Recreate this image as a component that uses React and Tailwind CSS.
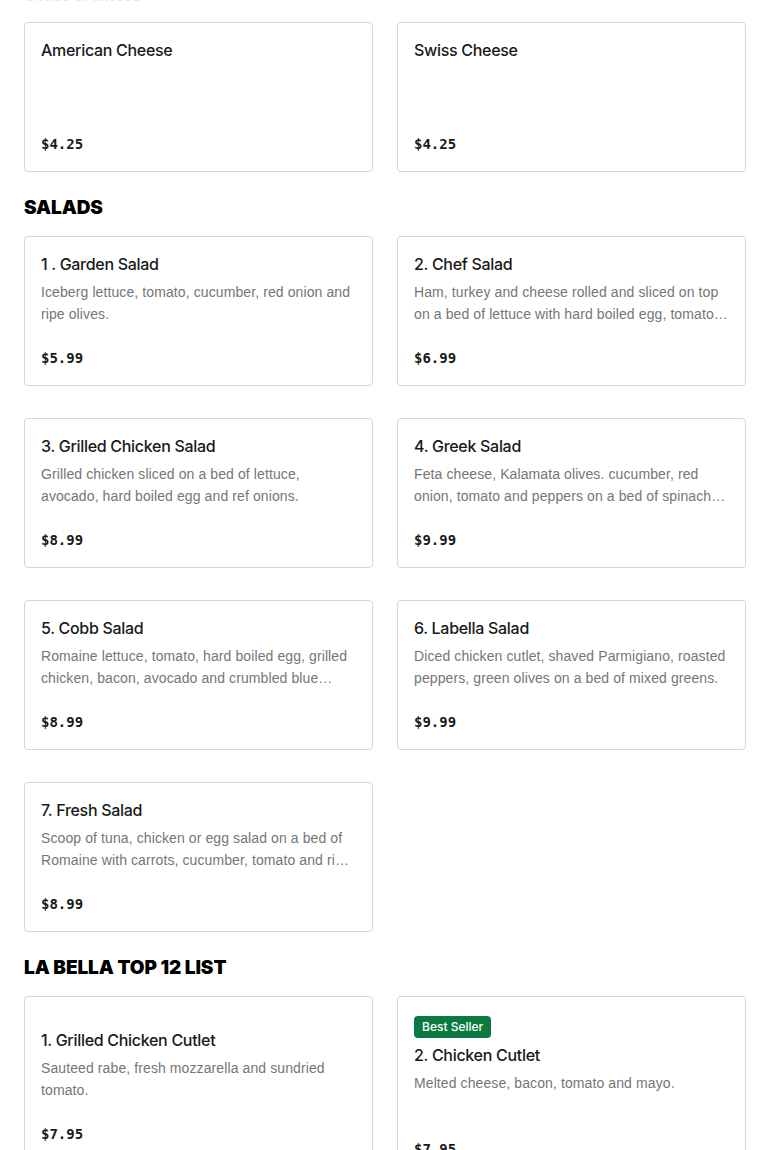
import React from "react";

const font = { fontFamily: "Inter, 'Noto Sans', Arial, sans-serif" };

function Card({ title, desc, price, badge }) {
  return (
    <div className="min-h-[150px] rounded-[4px] border border-[#d6d6d6] bg-white px-4 py-4 flex flex-col justify-center">
      <div>
        {badge && (
          <div className="mb-[6px] inline-flex h-[22px] items-center rounded-[4px] bg-[#0b7a41] px-2 text-[12px] font-medium text-white">
            {badge}
          </div>
        )}
        <div className="h-[24px] text-[16px] leading-[22px] font-medium text-[#191919] tracking-[-0.3px]">
          {title}
        </div>
        <div
          className="mt-1 h-[44px] text-[14px] leading-[22px] text-[#767676] tracking-[0.1px] line-clamp-2"
          style={{ fontFamily: "'Liberation Sans', Arial, sans-serif" }}
        >
          {desc}
        </div>
        <div
          className="mt-[22px] h-[22px] text-[14px] leading-[22px] font-bold text-[#191919]"
          style={{ fontFamily: "'DejaVu Sans Mono', 'Liberation Mono', monospace" }}
        >
          {price}
        </div>
      </div>
    </div>
  );
}

function Section({ title, children }) {
  return (
    <div className="mt-[22px]">
      <h2
        className="mb-[14px] h-[28px] text-[19px] leading-[28px] font-black uppercase text-black tracking-[-0.1px]"
        style={{ fontFamily: "Inter, Arial, sans-serif" }}
      >
        {title}
      </h2>
      <div className="grid grid-cols-2 gap-x-6 gap-y-8">{children}</div>
    </div>
  );
}

export default function App() {
  return (
    <div className="bg-white px-6 pb-10" style={font}>
      <div className="-mt-[14px] h-[20px] text-[14px] leading-[20px] text-[#e4e4e4]">
        Choice of cheese
      </div>
      <div className="mt-4 grid grid-cols-2 gap-x-6 gap-y-8">
        <Card title="American Cheese" desc="" price="$4.25" />
        <Card title="Swiss Cheese" desc="" price="$4.25" />
      </div>

      <Section title="Salads">
        <Card
          title="1 . Garden Salad"
          desc="Iceberg lettuce, tomato, cucumber, red onion and ripe olives."
          price="$5.99"
        />
        <Card
          title="2. Chef Salad"
          desc="Ham, turkey and cheese rolled and sliced on top on a bed of lettuce with hard boiled egg, tomato and cucumber."
          price="$6.99"
        />
        <Card
          title="3. Grilled Chicken Salad"
          desc="Grilled chicken sliced on a bed of lettuce, avocado, hard boiled egg and ref onions."
          price="$8.99"
        />
        <Card
          title="4. Greek Salad"
          desc="Feta cheese, Kalamata olives. cucumber, red onion, tomato and peppers on a bed of spinach and romaine."
          price="$9.99"
        />
        <Card
          title="5. Cobb Salad"
          desc="Romaine lettuce, tomato, hard boiled egg, grilled chicken, bacon, avocado and crumbled blue cheese."
          price="$8.99"
        />
        <Card
          title="6. Labella Salad"
          desc="Diced chicken cutlet, shaved Parmigiano, roasted peppers, green olives on a bed of mixed greens."
          price="$9.99"
        />
        <Card
          title="7. Fresh Salad"
          desc="Scoop of tuna, chicken or egg salad on a bed of Romaine with carrots, cucumber, tomato and ripe olives."
          price="$8.99"
        />
      </Section>

      <Section title="La Bella Top 12 List">
        <Card
          title="1. Grilled Chicken Cutlet"
          desc="Sauteed rabe, fresh mozzarella and sundried tomato."
          price="$7.95"
        />
        <Card
          title="2. Chicken Cutlet"
          desc="Melted cheese, bacon, tomato and mayo."
          price="$7.95"
          badge="Best Seller"
        />
      </Section>
    </div>
  );
}
